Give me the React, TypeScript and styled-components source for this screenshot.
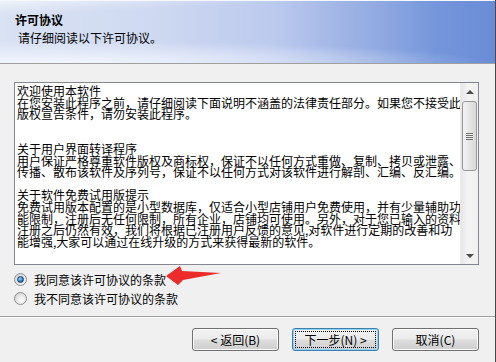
import styled, { createGlobalStyle } from "styled-components";

const GlobalStyle = createGlobalStyle`
  html, body {
    margin: 0;
    padding: 0;
    background: #f0f0f0;
  }
  body {
    font-family: "Noto Sans CJK SC", "Noto Sans", sans-serif;
  }
`;

const Window = styled.div`
  position: relative;
  width: 495px;
  height: 362px;
  overflow: hidden;
  background: #f0f0f0;
  border-right: 1px solid #4a4a4a;
  font-family: "Noto Sans CJK SC", "Noto Sans", sans-serif;
  font-size: 12px;
  color: #000;
`;

const Header = styled.div`
  height: 51px;
  padding: 11px 0 0 15px;
  border-top: 1px solid #f6f8fc;
  border-bottom: 1px solid #a0a0a0;
  background:
    radial-gradient(ellipse 430px 22px at 60px 62px, rgba(246, 249, 255, 0.85), rgba(246, 249, 255, 0) 100%),
    linear-gradient(177deg, rgba(255, 255, 255, 0.55) 0, rgba(255, 255, 255, 0.15) 10px, rgba(255, 255, 255, 0) 16px),
    linear-gradient(90deg, #d9e2f3 0%, #cfd9f1 30%, #bccaee 55%, #94acе2 75%, #7596db 88%, #6a8cd7 100%);
  background:
    radial-gradient(ellipse 430px 22px at 60px 62px, rgba(246, 249, 255, 0.85), rgba(246, 249, 255, 0) 100%),
    linear-gradient(177deg, rgba(255, 255, 255, 0.55) 0, rgba(255, 255, 255, 0.15) 10px, rgba(255, 255, 255, 0) 16px),
    linear-gradient(90deg, #d9e2f3 0%, #cfd9f1 30%, #bccaee 55%, #94ace2 75%, #7596db 88%, #6a8cd7 100%);
`;

const Title = styled.div`
  font-weight: bold;
  font-size: 12px;
  line-height: 15px;
`;

const Subtitle = styled.div`
  margin: 3px 0 0 3px;
  line-height: 15px;
`;

const Body = styled.div`
  position: relative;
  padding: 18px 16px 0 14px;
`;

const TextBox = styled.div`
  display: flex;
  height: 181px;
  border: 1px solid #828790;
  background: #fff;
`;

const Content = styled.div`
  flex: 1;
  padding: 2px 0 0 2px;
  white-space: pre;
  overflow: hidden;
  font-size: 12px;
  line-height: 11.6px;
`;

const ScrollBar = styled.div`
  width: 17px;
  display: flex;
  flex-direction: column;
  background: linear-gradient(90deg, #e6e6e6, #f4f4f4 40%, #f0f0f0);
  border-left: 1px solid #ececec;
`;

const ArrowButton = styled.div<{ $down?: boolean }>`
  height: 17px;
  display: flex;
  align-items: center;
  justify-content: center;

  &::before {
    content: "";
    width: 0;
    height: 0;
    border-left: 4px solid transparent;
    border-right: 4px solid transparent;
    ${(p) => (p.$down ? "border-top: 4px solid #4a4a4a;" : "border-bottom: 4px solid #4a4a4a;")}
  }
`;

const Thumb = styled.div`
  margin: 1px 1px 0 1px;
  height: 68px;
  border: 1px solid #979797;
  border-radius: 3px;
  background: linear-gradient(90deg, #f4f4f4, #e6e6e6 50%, #d8d8d8);
  display: flex;
  align-items: center;
  justify-content: center;
`;

const Grip = styled.div`
  width: 7px;
  height: 7px;
  background: repeating-linear-gradient(180deg, #6e6e6e 0 1px, #f0f0f0 1px 2px);
`;

const Track = styled.div`
  flex: 1;
`;

const RadioGroup = styled.div`
  margin-top: 5px;
  display: flex;
  flex-direction: column;
`;

const RadioRow = styled.label`
  height: 19px;
  display: flex;
  align-items: center;
  gap: 7px;
  padding-left: 0;
`;

const RadioDot = styled.span<{ $checked?: boolean }>`
  width: 11px;
  height: 11px;
  border-radius: 50%;
  border: 1px solid #8d8f91;
  background: radial-gradient(circle at 60% 65%, #fdfdfd 0, #e9e9e9 45%, #c9c9c9 100%);
  display: flex;
  align-items: center;
  justify-content: center;

  &::after {
    content: "";
    display: ${(p) => (p.$checked ? "block" : "none")};
    width: 5px;
    height: 5px;
    border-radius: 50%;
    border: 1px solid #1b3f6e;
    background: radial-gradient(circle at 40% 35%, #9fd5ff 0, #2f7fd0 55%, #12417e 100%);
  }
`;

const RadioLabel = styled.span`
  font-size: 12px;
  line-height: 14px;
`;

const Annotation = styled.svg`
  position: absolute;
  left: 164px;
  top: 200px;
`;

const Separator = styled.div`
  margin-top: 8px;
  height: 1px;
  background: #a0a0a0;
  box-shadow: 0 1px 0 #fff;
`;

const Footer = styled.div`
  display: flex;
  justify-content: flex-end;
  gap: 13px;
  padding: 11px 16px 0 0;
`;

const Button = styled.button<{ $focused?: boolean }>`
  position: relative;
  width: 87px;
  height: 23px;
  padding: 0;
  border: 1px solid ${(p) => (p.$focused ? "#3c7fb1" : "#707070")};
  border-radius: 3px;
  background: linear-gradient(180deg, #f2f2f2 0%, #ebebeb 48%, #dddddd 52%, #cfcfcf 100%);
  box-shadow: inset 0 0 0 1px ${(p) => (p.$focused ? "#8fd0f4" : "#fcfcfc")};
  font-family: "Noto Sans CJK SC", "Noto Sans", sans-serif;
  font-size: 12px;
  color: #000;

  &::after {
    content: "";
    display: ${(p) => (p.$focused ? "block" : "none")};
    position: absolute;
    inset: 2px;
    border: 1px dotted #000;
  }
`;

const lines = [
  "欢迎使用本软件",
  "在您安装此程序之前，请仔细阅读下面说明不涵盖的法律责任部分。如果您不接受此",
  "版权宣告条件，请勿安装此程序。",
  "",
  "",
  "关于用户界面转译程序",
  "用户保证严格尊重软件版权及商标权，保证不以任何方式重做、复制、拷贝或泄露、",
  "传播、散布该软件及序列号，保证不以任何方式对该软件进行解剖、汇编、反汇编。",
  "",
  "关于软件免费试用版提示",
  "免费试用版本配置的是小型数据库，仅适合小型店铺用户免费使用，并有少量辅助功",
  "能限制，注册后无任何限制，所有企业，店铺均可使用。另外，对于您已输入的资料",
  "注册之后仍然有效，我们将根据已注册用户反馈的意见,对软件进行定期的改善和功",
  "能增强,大家可以通过在线升级的方式来获得最新的软件。",
];

function App() {
  return (
    <Window>
      <GlobalStyle />
      <Header>
        <Title>许可协议</Title>
        <Subtitle>请仔细阅读以下许可协议。</Subtitle>
      </Header>

      <Body>
        <TextBox>
          <Content>{lines.join("\n")}</Content>
          <ScrollBar>
            <ArrowButton />
            <Thumb>
              <Grip />
            </Thumb>
            <Track />
            <ArrowButton $down />
          </ScrollBar>
        </TextBox>

        <RadioGroup>
          <RadioRow>
            <RadioDot $checked />
            <RadioLabel>我同意该许可协议的条款</RadioLabel>
          </RadioRow>
          <RadioRow>
            <RadioDot />
            <RadioLabel>我不同意该许可协议的条款</RadioLabel>
          </RadioRow>
        </RadioGroup>

        <Annotation width="60" height="22" viewBox="0 0 60 22">
          <polygon points="2,12 16,2 18,7 57,9 19,16 14,21" fill="#ec2b2b" />
        </Annotation>
      </Body>

      <Separator />

      <Footer>
        <Button>&lt; 返回(B)</Button>
        <Button $focused>下一步(N) &gt;</Button>
        <Button>取消(C)</Button>
      </Footer>
    </Window>
  );
}

export default App;
